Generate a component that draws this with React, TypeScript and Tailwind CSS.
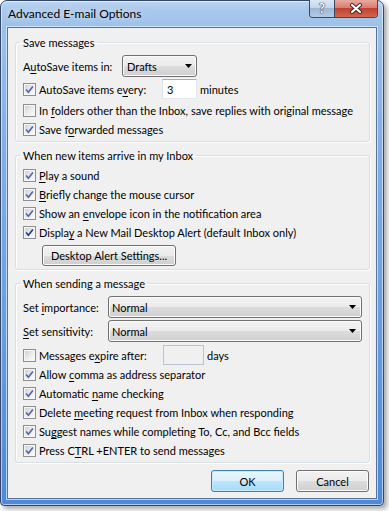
import React from "react";

const U = ({ children }: { children: React.ReactNode }) => (
  <span className="underline decoration-1 underline-offset-[2px]">{children}</span>
);

function Check({ checked = false, dark = false }: { checked?: boolean; dark?: boolean }) {
  return (
    <span className="flex h-[13px] w-[13px] shrink-0 items-center justify-center border border-[#8e8f8f] bg-[#f4f4f4]">
      <span className="flex h-[11px] w-[11px] items-center justify-center border border-[#f6f6f6] bg-[linear-gradient(135deg,#cfd2d7_0%,#ececee_55%,#fbfbfb_100%)]">
        {checked && (
          <svg width="9" height="9" viewBox="0 0 9 9" className="block">
            <path
              d="M1.1 4.5 L3.4 7.2 L7.9 1.4"
              fill="none"
              stroke={dark ? "#1f3c93" : "#5468a6"}
              strokeWidth="1.7"
            />
          </svg>
        )}
      </span>
    </span>
  );
}

function CheckRow({
  checked = true,
  dark = false,
  children,
}: {
  checked?: boolean;
  dark?: boolean;
  children: React.ReactNode;
}) {
  return (
    <div className="flex h-[19px] items-center gap-[3px]">
      <Check checked={checked} dark={dark} />
      <span className="whitespace-nowrap">{children}</span>
    </div>
  );
}

function Arrow() {
  return (
    <svg width="7" height="4" viewBox="0 0 7 4" className="block">
      <path d="M0 0 H7 L3.5 4 Z" fill="#000" />
    </svg>
  );
}

function Combo({ text, className }: { text: string; className: string }) {
  return (
    <div
      className={`flex items-center justify-between rounded-[3px] border border-[#707070] bg-[linear-gradient(180deg,#f2f2f2_0%,#ebebeb_50%,#dddddd_50%,#cfcfcf_100%)] shadow-[inset_0_0_0_1px_#fbfbfb] ${className}`}
    >
      <span>{text}</span>
      <Arrow />
    </div>
  );
}

function TextBox({ value, className }: { value?: string; className: string }) {
  return <div className={`flex items-center border ${className}`}>{value}</div>;
}

function Group({
  title,
  children,
  className = "",
}: {
  title: string;
  children: React.ReactNode;
  className?: string;
}) {
  return (
    <fieldset
      className={`min-w-0 rounded-[3px] border border-[#d5dfe5] shadow-[1px_1px_0_#ffffff,inset_1px_1px_0_#ffffff] ${className}`}
    >
      <legend className="ml-[4px] px-[3px] leading-[15px] text-[#000]">{title}</legend>
      {children}
    </fieldset>
  );
}

function Button({
  children,
  def = false,
  className = "",
}: {
  children: React.ReactNode;
  def?: boolean;
  className?: string;
}) {
  return (
    <div
      className={
        def
          ? `flex items-center justify-center rounded-[3px] border border-[#3c7fb1] bg-[linear-gradient(180deg,#eaf6fd_0%,#d9f0fc_50%,#bee6fd_50%,#a7d9f5_100%)] shadow-[inset_0_0_0_1px_#c8eaff] ${className}`
          : `flex items-center justify-center rounded-[3px] border border-[#707070] bg-[linear-gradient(180deg,#f2f2f2_0%,#ebebeb_50%,#dddddd_50%,#cfcfcf_100%)] shadow-[inset_0_0_0_1px_#fbfbfb] ${className}`
      }
    >
      {children}
    </div>
  );
}

export default function App() {
  return (
    <div className="h-[511px] w-[389px] overflow-hidden bg-white font-['Lato','Liberation_Sans',sans-serif] text-[11px] leading-[15px] text-black">
      <div className="flex h-[506px] w-[384px] flex-col rounded-t-[7px] rounded-b-[4px] border border-[#33476a] bg-[linear-gradient(180deg,#bcd5f0_0px,#a9c7eb_10px,#9cc0e8_27px,#88b1e3_120px,#6e9fdf_300px,#4f88d8_506px)] px-[6px] pb-[6px] shadow-[inset_0_0_0_1px_rgba(255,255,255,0.55),3px_3px_5px_rgba(0,0,0,0.35)]">
        {/* title bar */}
        <div className="flex h-[26px] items-start justify-between">
          <div className="mt-[5px] ml-[1px] text-[12px] text-black [text-shadow:0_0_6px_rgba(255,255,255,0.9)]">
            Advanced E-mail Options
          </div>
          <div className="-mt-[1px] -mr-[1px] flex h-[18px] overflow-hidden rounded-b-[4px] border border-t-0 border-[#3b4a60]">
            <div className="flex w-[25px] items-center justify-center border-r border-[#3b4a60] bg-[linear-gradient(180deg,#dbe6f3_0%,#c5d6ea_45%,#9fb7d4_50%,#b5cbe4_100%)] text-[13px] font-bold leading-none text-white [text-shadow:0_0_1px_#2a3550,0_0_1px_#2a3550,0_0_1px_#2a3550]">
              ?
            </div>
            <div className="flex w-[42px] items-center justify-center bg-[linear-gradient(180deg,#e9aa9f_0%,#d87e70_45%,#c2402f_50%,#d0674f_100%)]">
              <svg width="14" height="11" viewBox="0 0 14 11" className="block">
                <path d="M3 2 L11 9 M11 2 L3 9" stroke="#3a2420" strokeWidth="4" strokeLinecap="round" />
                <path d="M3 2 L11 9 M11 2 L3 9" stroke="#ffffff" strokeWidth="2.2" strokeLinecap="round" />
              </svg>
            </div>
          </div>
        </div>

        {/* client */}
        <div className="flex min-w-0 flex-1 flex-col border border-[#56739a] bg-[#f0f0f0] pt-[7px] pr-[6px] pl-[7px] shadow-[0_0_0_1px_rgba(215,238,255,0.75)]">
          <Group title="Save messages">
            <div className="pr-[7px] pb-[2px] pl-[7px]">
              <div className="mt-[5px] flex h-[22px] items-center">
                <span className="w-[99px] whitespace-nowrap">
                  A<U>u</U>toSave items in:
                </span>
                <Combo text="Drafts" className="h-[22px] w-[75px] pr-[4px] pl-[4px]" />
              </div>
              <div className="mt-[2px] flex h-[20px] items-center">
                <Check checked />
                <span className="ml-[3px] w-[123px] whitespace-nowrap">
                  AutoSave items e<U>v</U>ery:
                </span>
                <TextBox
                  value="3"
                  className="h-[20px] w-[35px] border-[#abadb3] border-r-[#e3e9ef] border-b-[#e3e9ef] border-l-[#dbdfe6] bg-white pl-[4px]"
                />
                <span className="ml-[3px]">minutes</span>
              </div>
              <div className="mt-[2px]">
                <CheckRow checked={false}>
                  In <U>f</U>olders other than the Inbox, save replies with original message
                </CheckRow>
                <CheckRow>
                  Save f<U>o</U>rwarded messages
                </CheckRow>
              </div>
            </div>
          </Group>

          <Group title="When new items arrive in my Inbox" className="mt-[6px]">
            <div className="pr-[7px] pb-[3px] pl-[7px]">
              <div className="mt-[3px]">
                <CheckRow>
                  <U>P</U>lay a sound
                </CheckRow>
                <CheckRow>
                  <U>B</U>riefly change the mouse cursor
                </CheckRow>
                <CheckRow>
                  Show an <U>e</U>nvelope icon in the notification area
                </CheckRow>
                <CheckRow dark>
                  Displa<U>y</U> a New Mail Desktop Alert (default Inbox only)
                </CheckRow>
              </div>
              <Button className="mt-[3px] ml-[19px] h-[21px] w-[134px]">Desktop Alert Settings...</Button>
            </div>
          </Group>

          <Group title="When sending a message" className="mt-[6px]">
            <div className="pr-[7px] pb-[2px] pl-[7px]">
              <div className="mt-[5px] flex h-[22px] items-center">
                <span className="w-[85px] whitespace-nowrap">
                  Set <U>i</U>mportance:
                </span>
                <Combo text="Normal" className="h-[22px] w-[254px] pr-[5px] pl-[3px]" />
              </div>
              <div className="mt-[2px] flex h-[22px] items-center">
                <span className="w-[85px] whitespace-nowrap">
                  <U>S</U>et sensitivity:
                </span>
                <Combo text="Normal" className="h-[22px] w-[254px] pr-[5px] pl-[3px]" />
              </div>
              <div className="mt-[3px] flex h-[20px] items-center">
                <Check />
                <span className="ml-[3px] w-[124px] whitespace-nowrap">
                  Messages e<U>x</U>pire after:
                </span>
                <TextBox className="h-[20px] w-[41px] border-[#b5c4d6] bg-[#f0f0f0]" />
                <span className="ml-[3px]">days</span>
              </div>
              <CheckRow>
                Allow <U>c</U>omma as address separator
              </CheckRow>
              <CheckRow>
                Automatic <U>n</U>ame checking
              </CheckRow>
              <CheckRow>
                Delete <U>m</U>eeting request from Inbox when responding
              </CheckRow>
              <CheckRow>
                Su<U>g</U>gest names while completing To, Cc, and Bcc fields
              </CheckRow>
              <CheckRow>
                Press C<U>T</U>RL +ENTER to send messages
              </CheckRow>
            </div>
          </Group>

          <div className="mt-[7px] mr-[1px] flex justify-end gap-[12px]">
            <Button def className="h-[22px] w-[73px]">
              OK
            </Button>
            <Button className="h-[22px] w-[73px]">Cancel</Button>
          </div>
        </div>
      </div>
    </div>
  );
}
